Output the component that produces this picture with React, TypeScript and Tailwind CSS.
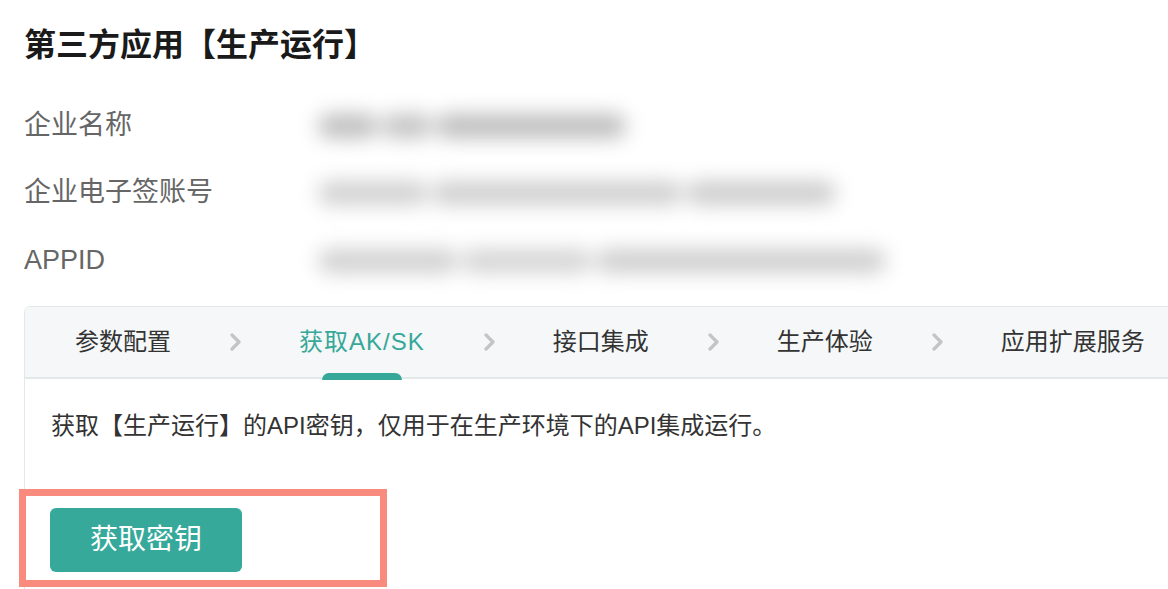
const font = { fontFamily: '"Liberation Sans", "Noto Sans CJK SC", sans-serif' };

const rows = [
  { label: '企业名称', bars: [{ w: 60, c: 'bg-[#bdbdbd]' }, { w: 50, c: 'bg-[#c2c2c2]' }, { w: 190, c: 'bg-[#bcbcbc]' }] },
  { label: '企业电子签账号', bars: [{ w: 110, c: 'bg-[#d0d0d0]' }, { w: 250, c: 'bg-[#cecece]' }, { w: 150, c: 'bg-[#cccccc]' }] },
  { label: 'APPID', bars: [{ w: 140, c: 'bg-[#d0d0d0]' }, { w: 130, c: 'bg-[#d4d4d4]' }, { w: 290, c: 'bg-[#cecece]' }] },
];

const steps = ['参数配置', '获取AK/SK', '接口集成', '生产体验', '应用扩展服务'];

function Chevron() {
  return (
    <svg width="12" height="20" viewBox="0 0 12 20" className="shrink-0">
      <path d="M3 3l7 7-7 7" fill="none" stroke="#c1c5c5" strokeWidth="3.2" strokeLinecap="round" strokeLinejoin="round" />
    </svg>
  );
}

export default function App() {
  return (
    <div className="relative w-[1168px] h-[589px] overflow-hidden bg-white" style={font}>
      <h1 className="pl-[24px] pt-[25px] text-[32px] leading-[40px] font-bold text-[#1a1a1a]">
        第三方应用【生产运行】
      </h1>

      <div className="mt-[26px] pl-[24px]">
        {rows.map((r) => (
          <div key={r.label} className="flex items-center h-[67.5px]">
            <div className="w-[294px] text-[27px] text-[#666]">{r.label}</div>
            <div className="flex gap-[4px] blur-[10px] mt-[2px]">
              {r.bars.map((b, i) => (
                <div key={i} className={`h-[24px] rounded-full ${b.c}`} style={{ width: b.w }} />
              ))}
            </div>
          </div>
        ))}
      </div>

      <div className="ml-[24px] mt-[12px] w-[1170px] h-[300px] border border-[#e3e9e9] rounded-tl-[6px]">
        <div className="flex items-center gap-[58px] h-[72px] pl-[50px] bg-[#f5f7f8] border-b-2 border-[#e3e9e9] rounded-tl-[6px]">
          {steps.map((s, i) => (
            <div key={s} className="flex items-center gap-[58px]">
              {i > 0 && <Chevron />}
              <div
                className={`relative h-[72px] flex items-center text-[24px] whitespace-nowrap ${
                  i === 1 ? 'text-[#35a899] tracking-[1px]' : 'text-[#333]'
                }`}
              >
                {s}
                {i === 1 && (
                  <span className="absolute bottom-[-2px] left-1/2 -translate-x-1/2 w-[80px] h-[7px] rounded-t-[7px] bg-[#35a899]" />
                )}
              </div>
            </div>
          ))}
        </div>

        <p className="pl-[26px] pt-[31px] text-[24px] leading-[32px] text-[#333]">
          获取【生产运行】的API密钥，仅用于在生产环境下的API集成运行。
        </p>

        <button className="ml-[25px] mt-[66px] w-[192px] h-[64px] rounded-[6px] bg-[#37a99b] text-white text-[28px]">
          获取密钥
        </button>
      </div>

      <div className="absolute left-[19px] top-[489px] w-[368px] h-[98px] border-[7px] border-[#f88a7e]" />
    </div>
  );
}
